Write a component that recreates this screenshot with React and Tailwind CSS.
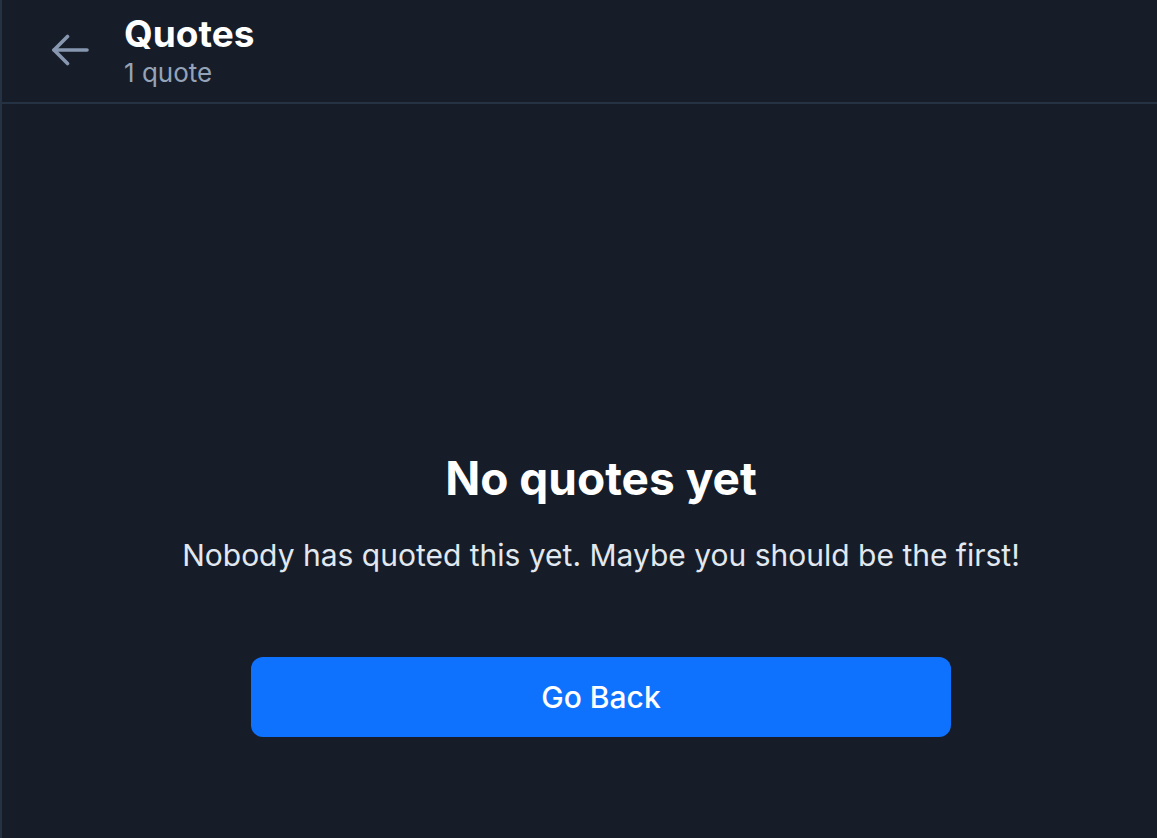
export default function App() {
    return (
        <div
            className="h-[838px] w-[1157px] overflow-hidden bg-[#161d29] text-white"
            style={{ fontFamily: 'Inter, "Noto Sans", sans-serif' }}
        >
            <div className="flex h-full w-[1200px] flex-col border-l-2 border-[#243244]">
                <header className="flex h-[104px] shrink-0 items-start border-b-2 border-[#243244] pl-[47px] pt-[14px]">
                    <button className="mt-[20px] flex h-[32px] w-[40px] items-center justify-center text-[#8797b0]">
                        <svg width="40" height="32" viewBox="0 0 40 32" fill="none" stroke="currentColor" strokeWidth="3.6" strokeLinecap="round" strokeLinejoin="round">
                            <path d="M38 16H5" />
                            <path d="M18.5 2.5L5 16l13.5 13.5" />
                        </svg>
                    </button>
                    <div className="ml-[35px] flex flex-col">
                        <h1 className="text-[37px] font-bold leading-[40px]">Quotes</h1>
                        <p className="mt-[4px] text-[26px] leading-[30px] text-[#94a3b8]">1 quote</p>
                    </div>
                </header>

                <main className="flex flex-1 flex-col items-center pt-[346px]">
                    <h2 className="text-[46px] font-bold leading-[56px]">No quotes yet</h2>
                    <p className="mt-[31px] text-[30px] leading-[36px] text-[#e2e8f0]">
                        Nobody has quoted this yet. Maybe you should be the first!
                    </p>
                    <button className="mt-[84px] h-[80px] w-[700px] rounded-[12px] bg-[#0f72ff] text-[30px] font-medium text-white">
                        Go Back
                    </button>
                </main>
            </div>
        </div>
    )
}
